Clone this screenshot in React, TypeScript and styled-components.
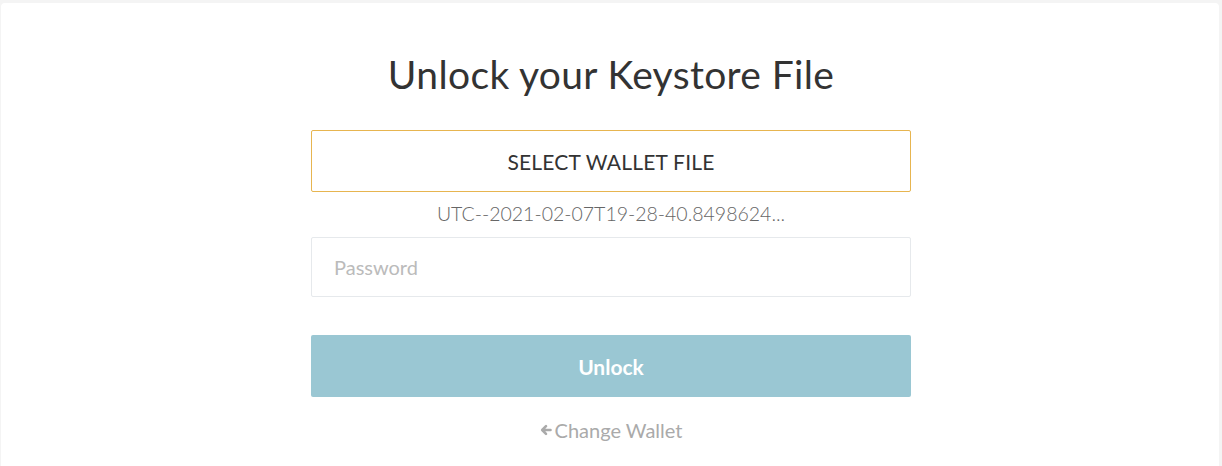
import React from "react";
import styled, { createGlobalStyle } from "styled-components";

const Global = createGlobalStyle`
  html, body { margin: 0; padding: 0; background: #f4f4f4; }
  body { font-family: Lato, "Open Sans", sans-serif; }
  * { box-sizing: border-box; }
`;

const Page = styled.div`
  padding: 3px 3px 0 1px;
  height: 466px;
  overflow: hidden;
`;

const Card = styled.div`
  background: #fff;
  border-radius: 4px 4px 0 0;
  height: 100%;
  display: flex;
  flex-direction: column;
  align-items: center;
  padding-top: 46px;
`;

const Title = styled.h1`
  margin: 0;
  font-family: Lato, sans-serif;
  font-weight: 400;
  font-size: 39px;
  line-height: 50px;
  color: #333;
  letter-spacing: 0.35px;
  margin-left: 2px;
`;

const Form = styled.div`
  width: 600px;
  margin-left: 2px;
  display: flex;
  flex-direction: column;
  align-items: stretch;
  margin-top: 31px;
`;

const SelectButton = styled.button`
  height: 62px;
  border: 1px solid #e7b550;
  border-radius: 2px;
  background: #fff;
  font-family: Lato, sans-serif;
  font-size: 21px;
  color: #333;
  letter-spacing: 0.2px;
  cursor: pointer;
`;

const FileName = styled.div`
  text-align: center;
  font-family: Lato, sans-serif;
  font-weight: 300;
  font-size: 19.5px;
  color: #666;
  line-height: 24px;
  margin-top: 10px;
`;

const PasswordInput = styled.input`
  margin-top: 11px;
  height: 60px;
  border: 1px solid #e6e9ec;
  border-radius: 2px;
  padding: 0 22px;
  font-family: Lato, sans-serif;
  font-size: 20px;
  color: #333;
  outline: none;
  &::placeholder { color: #bbb; }
`;

const UnlockButton = styled.button`
  margin-top: 38px;
  height: 62px;
  border: none;
  border-radius: 2px;
  background: #9ac7d3;
  color: #fff;
  font-family: Lato, sans-serif;
  font-weight: 700;
  font-size: 21px;
  cursor: pointer;
`;

const ChangeLink = styled.a`
  margin-top: 21px;
  align-self: center;
  display: inline-flex;
  align-items: center;
  gap: 3px;
  font-family: Lato, sans-serif;
  font-size: 20px;
  color: #aaa;
  text-decoration: none;
  cursor: pointer;
`;

const Arrow = () => (
  <svg width="12" height="12" viewBox="0 0 12 12" fill="none" stroke="#aaa" strokeWidth="2.6" strokeLinecap="round" strokeLinejoin="round">
    <path d="M10.5 6H2.5M6 2.2L2.2 6L6 9.8" />
  </svg>
);

export default function App() {
  return (
    <>
      <Global />
      <Page>
        <Card>
          <Title>Unlock your Keystore File</Title>
          <Form>
            <SelectButton>SELECT WALLET FILE</SelectButton>
            <FileName>UTC--2021-02-07T19-28-40.8498624...</FileName>
            <PasswordInput type="password" placeholder="Password" />
            <UnlockButton>Unlock</UnlockButton>
            <ChangeLink>
              <Arrow />
              Change Wallet
            </ChangeLink>
          </Form>
        </Card>
      </Page>
    </>
  );
}
